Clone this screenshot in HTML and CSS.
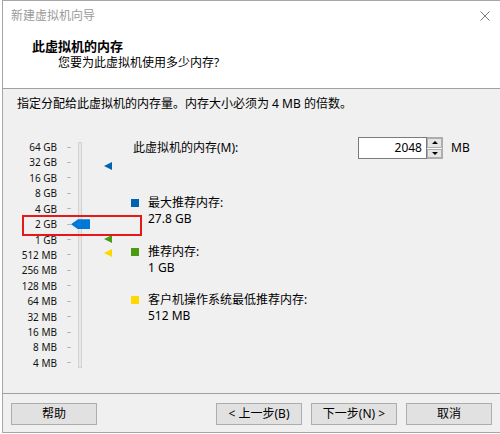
FILE: index.html
```html
<!DOCTYPE html>
<html lang="zh-CN">
<head>
<meta charset="utf-8">
<title>新建虚拟机向导</title>
<link rel="stylesheet" href="styles.css">
</head>
<body>
<div class="window">
  <div class="header">
    <div class="titlebar">
      <span class="title">新建虚拟机向导</span>
      <svg class="close" width="10" height="10" viewBox="0 0 10 10"><path d="M0.5 0.5 L9.5 9.5 M9.5 0.5 L0.5 9.5" stroke="#7a7a7a" stroke-width="1" fill="none"/></svg>
    </div>
    <div class="heading">此虚拟机的内存</div>
    <div class="subheading">您要为此虚拟机使用多少内存?</div>
  </div>
  <div class="body">
    <p class="intro">指定分配给此虚拟机的内存量。内存大小必须为 4 MB 的倍数。</p>
    <div class="main">
      <div class="slider">
        <ul class="scale">
          <li><span class="lbl">64 GB</span><span class="tick"></span></li>
          <li><span class="lbl">32 GB</span><span class="tick"></span></li>
          <li><span class="lbl">16 GB</span><span class="tick"></span></li>
          <li><span class="lbl">8 GB</span><span class="tick"></span></li>
          <li><span class="lbl">4 GB</span><span class="tick"></span></li>
          <li><span class="lbl">2 GB</span><span class="tick"></span></li>
          <li><span class="lbl">1 GB</span><span class="tick"></span></li>
          <li><span class="lbl">512 MB</span><span class="tick"></span></li>
          <li><span class="lbl">256 MB</span><span class="tick"></span></li>
          <li><span class="lbl">128 MB</span><span class="tick"></span></li>
          <li><span class="lbl">64 MB</span><span class="tick"></span></li>
          <li><span class="lbl">32 MB</span><span class="tick"></span></li>
          <li><span class="lbl">16 MB</span><span class="tick"></span></li>
          <li><span class="lbl">8 MB</span><span class="tick"></span></li>
          <li><span class="lbl">4 MB</span><span class="tick"></span></li>
        </ul>
        <div class="track"></div>
        <div class="thumb"></div>
        <span class="marker marker-max"></span>
        <span class="marker marker-rec"></span>
        <span class="marker marker-min"></span>
        <div class="highlight"></div>
      </div>
      <div class="info">
        <div class="mem-row">
          <span class="mem-label">此虚拟机的内存(M):</span>
          <div class="spin">
            <div class="spin-input">2048</div>
            <div class="spin-btns">
              <span class="spin-btn"><span class="arrow-up"></span></span>
              <span class="spin-btn"><span class="arrow-down"></span></span>
            </div>
          </div>
          <span class="unit">MB</span>
        </div>
        <div class="legend">
          <div class="legend-item">
            <span class="swatch swatch-max"></span>
            <div class="legend-text"><div>最大推荐内存:</div><div>27.8 GB</div></div>
          </div>
          <div class="legend-item">
            <span class="swatch swatch-rec"></span>
            <div class="legend-text"><div>推荐内存:</div><div>1 GB</div></div>
          </div>
          <div class="legend-item">
            <span class="swatch swatch-min"></span>
            <div class="legend-text"><div>客户机操作系统最低推荐内存:</div><div>512 MB</div></div>
          </div>
        </div>
      </div>
    </div>
  </div>
  <div class="footer">
    <button class="btn">帮助</button>
    <span class="spacer"></span>
    <div class="btn-group">
      <button class="btn">&lt; 上一步(B)</button>
      <button class="btn">下一步(N) &gt;</button>
      <button class="btn">取消</button>
    </div>
  </div>
</div>
</body>
</html>
```
FILE: styles.css
```css
* { box-sizing: border-box; }
html, body { margin: 0; padding: 0; background: #fff; }
body {
  font-family: "Noto Sans", "Noto Sans CJK SC", sans-serif;
  font-size: 12px;
  line-height: 16px;
  color: #000;
}
.window {
  margin-left: 2px;
  width: 498px;
  height: 433px;
  border-top: 1px solid #a6a6a6;
  border-left: 1px solid #a6a6a6;
  border-bottom: 1px solid #a6a6a6;
  display: flex;
  flex-direction: column;
  overflow: hidden;
}
.header {
  height: 88px;
  flex: none;
  background: #fff;
  border-bottom: 1px solid #a0a0a0;
}
.titlebar {
  height: 29px;
  display: flex;
  align-items: center;
  padding: 0 10px 0 8px;
}
.title { color: #9a9a9a; }
.close { margin-left: auto; display: block; }
.heading {
  margin-top: 8px;
  padding-left: 29px;
  font-weight: bold;
  font-size: 13px;
}
.subheading {
  margin-top: 1px;
  padding-left: 55px;
}
.body {
  height: 305px;
  flex: none;
  background: #f0f0f0;
  border-bottom: 1px solid #a0a0a0;
}
.intro {
  margin: 7px 0 0 14px;
}
.main {
  margin-top: 25px;
  display: flex;
  align-items: flex-start;
}
.slider {
  position: relative;
  width: 120px;
  margin-top: 2.3px;
  display: flex;
  align-items: flex-start;
}
.scale {
  list-style: none;
  margin: 0;
  padding: 0;
  width: 68px;
}
.scale li {
  height: 15.43px;
  display: flex;
  align-items: center;
}
.lbl {
  width: 54px;
  text-align: right;
  font-size: 10px;
  line-height: 12px;
  color: #111;
}
.tick {
  margin-left: 10px;
  width: 4px;
  height: 1px;
  background: #b9b9b9;
}
.track {
  margin-left: 7px;
  margin-top: 2.7px;
  width: 4px;
  height: 226px;
  background: #e7e7e7;
  border: 1px solid #d4d4d4;
}
.thumb {
  position: absolute;
  left: 68px;
  top: 80px;
  width: 19px;
  height: 10px;
  background: #0078d7;
  clip-path: polygon(0 50%, 7px 0, 100% 0, 100% 100%, 7px 100%);
}
.marker {
  position: absolute;
  left: 101px;
  width: 0;
  height: 0;
  border-top: 4.5px solid transparent;
  border-bottom: 4.5px solid transparent;
  border-right: 8px solid #0063b1;
}
.marker-max { top: 23px; border-right-color: #0063b1; }
.marker-rec { top: 96px; border-right-color: #4a9a12; }
.marker-min { top: 110px; border-right-color: #ffd800; }
.highlight {
  position: absolute;
  left: 19px;
  top: 76px;
  width: 120px;
  height: 21px;
  border: 2px solid #e81818;
}
.info {
  margin-left: 8px;
}
.mem-row {
  display: flex;
  align-items: center;
  height: 22px;
}
.mem-label {
  margin-left: 2px;
  width: 225px;
}
.spin { display: flex; }
.spin-input {
  width: 69px;
  height: 22px;
  background: #fff;
  border: 1px solid #7a7a7a;
  text-align: right;
  padding-right: 4px;
  line-height: 20px;
}
.spin-btns {
  width: 16px;
  height: 22px;
  display: flex;
  flex-direction: column;
  gap: 1px;
  border: 1px solid #adadad;
  border-left: none;
  background: #fff;
}
.spin-btn {
  flex: 1;
  background: #e5e5e5;
  border: 1px solid #adadad;
  display: flex;
  align-items: center;
  justify-content: center;
}
.arrow-up {
  width: 0; height: 0;
  border-left: 3px solid transparent;
  border-right: 3px solid transparent;
  border-bottom: 3px solid #000;
}
.arrow-down {
  width: 0; height: 0;
  border-left: 3px solid transparent;
  border-right: 3px solid transparent;
  border-top: 3px solid #000;
}
.unit { margin-left: 8px; }
.legend {
  margin-top: 36px;
  display: flex;
  flex-direction: column;
  gap: 16.5px;
}
.legend-item {
  display: flex;
  align-items: flex-start;
}
.swatch {
  width: 8px;
  height: 8px;
  margin-top: 4px;
  flex: none;
}
.swatch-max { background: #0063b1; }
.swatch-rec { background: #4a9a12; }
.swatch-min { background: #ffd800; }
.legend-text { margin-left: 9px; }
.footer {
  height: 38px;
  flex: none;
  display: flex;
  align-items: flex-start;
  padding: 9px 8px 0 8px;
  background: #f0f0f0;
}
.spacer { flex: 1; }
.btn-group { display: flex; gap: 9px; }
.btn {
  width: 86px;
  height: 22px;
  margin: 0;
  padding: 0;
  border: 1px solid #adadad;
  background: #e1e1e1;
  font: inherit;
  line-height: 20px;
  color: #000;
  text-align: center;
}
```
